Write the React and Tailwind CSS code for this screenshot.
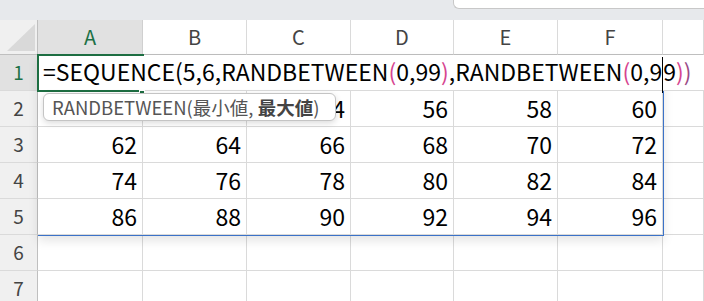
import React from 'react';

const font = { fontFamily: '"Noto Sans CJK JP", "Liberation Sans", sans-serif' };

const colLetters = ['A', 'B', 'C', 'D', 'E', 'F', ''];

// rows 2..5 of the spilled SEQUENCE result (A2 and B2 sit under the tooltip)
const values = [
    ['', '', 54, 56, 58, 60],
    [62, 64, 66, 68, 70, 72],
    [74, 76, 78, 80, 82, 84],
    [86, 88, 90, 92, 94, 96],
];

const Pink = ({ children }) => <span className="text-[#d6448f]">{children}</span>;

const App = () => {
    return (
        <div className="relative w-[704px] h-[301px] overflow-hidden bg-white" style={font}>
            {/* Top strip */}
            <div className="h-5 bg-[#e7e9ec] flex justify-end">
                <div className="w-[251px] h-[9px] bg-white border-l border-b border-[#c8c8c8] rounded-bl-md"></div>
            </div>

            <div className="grid grid-cols-[38px_105px_104px_104px_103px_104px_105px_1fr] grid-rows-[35px_36px_36px_36px_36px_36px_36px_36px]">
                {/* Header row */}
                <div className="relative bg-[#f0f0f0] border-r border-b border-[#bfbfbf]">
                    <svg className="absolute left-[7px] top-[4px]" width="29" height="28" viewBox="0 0 29 28">
                        <polygon points="28,0 28,27 0,27" fill="#d9d9d9" />
                    </svg>
                </div>
                {colLetters.map((c, i) => (
                    <div
                        key={i}
                        className={`flex items-center justify-center text-[20px] border-b border-[#bfbfbf] border-r ${i === 0 ? 'bg-[#e1e1e1] text-[#1d7146] border-r-[#d0d0d0]' : 'bg-white text-[#444] border-r-[#dadada]'}`}
                    >
                        {c}
                    </div>
                ))}

                {/* Row 1: in-cell edit */}
                <div className="flex items-center justify-center bg-[#e1e1e1] text-[19px] text-[#1d7146] border-r border-[#bfbfbf] border-b border-b-[#dadada]">1</div>
                <div className="col-span-7 relative z-10 flex items-center bg-white border-b border-[#dadada] pl-[5px] whitespace-nowrap text-[23px] text-black leading-none">
                    <span>
                        =SEQUENCE(5,6,RANDBETWEEN<Pink>(</Pink>0,99<Pink>)</Pink>,RANDBETWEEN<Pink>(</Pink>0,9
                        <span className="inline-block w-0 h-[36px] align-middle border-l border-black -my-2"></span>
                        9<Pink>)</Pink><span className="text-[#9a4a86]">)</span>
                    </span>
                </div>

                {/* Rows 2..7 */}
                {[2, 3, 4, 5, 6, 7].map((r) => (
                    <React.Fragment key={r}>
                        <div className="flex items-center justify-center bg-[#f0f0f0] text-[19px] text-[#444] border-r border-[#bfbfbf] border-b border-b-[#dadada]">
                            {r}
                        </div>
                        {colLetters.map((c, ci) => {
                            const v = r <= 5 && ci < 6 ? values[r - 2][ci] : '';
                            return (
                                <div key={ci} className="flex items-center justify-end pr-[5px] border-r border-b border-[#dadada] text-[23px] text-black">
                                    {v}
                                </div>
                            );
                        })}
                    </React.Fragment>
                ))}
            </div>

            {/* Active cell A1 */}
            <div className="absolute left-[37px] top-[54px] w-[107px] h-[38px] border-t-2 border-l-2 border-b-2 border-[#1d6e42] z-20 pointer-events-none"></div>
            <div className="absolute left-[139px] top-[90px] w-[6px] h-[5px] bg-[#1d6e42] border border-white z-20"></div>

            {/* Spill range outline */}
            <div className="absolute left-[38px] top-[55px] w-[626px] h-[181px] border-r border-b border-[#3b72c8] shadow-[0_5px_10px_rgba(0,0,0,0.10)] pointer-events-none"></div>

            {/* Function tooltip */}
            <div className="absolute left-[43px] top-[93px] w-[293px] h-[28px] z-30 flex items-center px-[8px] bg-white border border-[#c4c4c4] rounded-md shadow-[0_2px_6px_rgba(0,0,0,0.15)] text-[18.5px] text-[#555] whitespace-nowrap leading-none">
                <span>RANDBETWEEN(最小値, <b className="font-bold text-[#444]">最大値</b>)</span>
            </div>
        </div>
    );
};

export default App;
